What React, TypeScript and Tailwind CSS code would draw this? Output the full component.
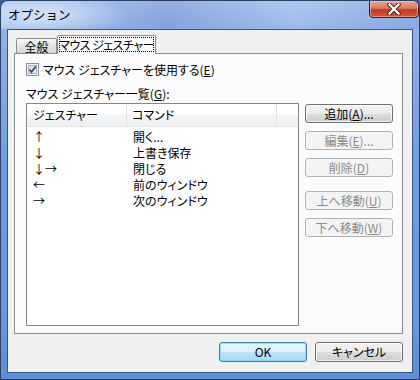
export default function App() {
  const rows: [string, string][] = [
    ["↑", "開く..."],
    ["↓", "上書き保存"],
    ["↓→", "閉じる"],
    ["←", "前のウィンドウ"],
    ["→", "次のウィンドウ"],
  ];
  return (
    <div className="w-[420px] h-[380px] bg-[#3a5f9a]">
      <div className="w-[420px] h-[380px] rounded-t-[8px] border border-[#2a3f63] overflow-hidden flex flex-col font-['Noto_Sans_CJK_JP',sans-serif] [font-feature-settings:'palt'] text-[12px] text-black bg-[linear-gradient(to_bottom,#a6c2ec_0px,#8fb2e8_30px,#6f9be2_45%,#6a97e0_80%,#5e8dd9_100%)]">
        {/* title bar */}
        <div className="h-[28px] flex items-start justify-between bg-[radial-gradient(ellipse_90px_22px_at_40px_14px,rgba(225,236,252,0.85),rgba(225,236,252,0)),linear-gradient(to_right,rgba(255,255,255,0.15),rgba(40,70,160,0.15)_40%,rgba(255,255,255,0.1)_70%,rgba(40,70,160,0.1))]">
          <div className="pl-[7px] pt-[6px] text-[12.5px] leading-[16px] text-black [font-feature-settings:normal]">オプション</div>
          <div className="w-[50px] h-[18px] mt-[-1px] rounded-b-[4px] border border-[#4a1a12] bg-[linear-gradient(to_bottom,#e9a793_0%,#d77b63_45%,#c23a1e_55%,#d0573a_100%)] flex items-center justify-center shadow-[inset_0_0_0_1px_rgba(255,210,200,0.5)]">
            <svg width="14" height="12" viewBox="0 0 14 12">
              <path d="M2.5 1.5 L11.5 10.5 M11.5 1.5 L2.5 10.5" stroke="#5a2018" strokeWidth="4.2" strokeLinecap="square" />
              <path d="M2.5 1.5 L11.5 10.5 M11.5 1.5 L2.5 10.5" stroke="#ffffff" strokeWidth="2.2" strokeLinecap="square" />
            </svg>
          </div>
        </div>
        {/* client */}
        <div className="flex-1 mx-[6px] mb-[6px] border border-[#3d5680] bg-[#f0f0f0] flex flex-col">
          <div className="pl-[6px] pt-[5px]">
            {/* tabs */}
            <div className="h-[18px] flex items-end pl-[2px] relative z-10">
              <div className="w-[41px] h-[15px] border-t border-l border-r border-[#898c95] rounded-t-[2px] bg-[linear-gradient(to_bottom,#f6f6f6,#e6e6e6_50%,#d6d6d6)] flex items-center justify-center leading-[13px]">
                全般
              </div>
              <div className="w-[99px] h-[19px] mb-[-1px] border-t border-l border-r border-[#898c95] rounded-t-[2px] bg-[#fcfcfc] p-[1px]">
                <div className="w-full h-[15px] border border-dotted border-black flex items-center justify-center leading-[13px] whitespace-nowrap tracking-[-0.5px]">
                  マウス ジェスチャー
                </div>
              </div>
            </div>
            {/* panel */}
            <div className="w-[389px] h-[281px] border border-[#898c95] bg-[#fcfcfc] pl-[11px] pt-[9px] flex flex-col">
              <div className="flex items-center h-[13px]">
                <svg width="13" height="13" viewBox="0 0 13 13">
                  <rect x="0.5" y="0.5" width="12" height="12" fill="#f4f4f4" stroke="#8e8f8f" />
                  <rect x="2.5" y="2.5" width="8" height="8" fill="#dfe4ea" stroke="#a9b1ba" />
                  <path d="M3.5 6.5 L5.5 9 L9.8 3.2" fill="none" stroke="#2b4c8c" strokeWidth="1.7" />
                </svg>
                <span className="ml-[4px] leading-[13px]">
                  マウス ジェスチャーを使用する(<span className="underline">E</span>)
                </span>
              </div>
              <div className="mt-[11px] h-[13px] leading-[13px]">
                マウス ジェスチャー一覧(<span className="underline">G</span>):
              </div>
              <div className="mt-[3px] flex items-start">
                <div className="w-[273px] h-[223px] border border-[#828790] bg-white flex flex-col">
                  <div className="h-[23px] flex bg-[linear-gradient(to_bottom,#ffffff,#ffffff_45%,#f3f4f6_55%,#eef0f2)] border-b border-[#e5e5e5]">
                    <div className="w-[100px] border-r border-[#dfe2e6] pl-[6px] flex items-center">ジェスチャー</div>
                    <div className="w-[150px] border-r border-[#dfe2e6] pl-[5px] flex items-center">コマンド</div>
                    <div className="flex-1"></div>
                  </div>
                  <div className="pt-[2px]">
                    {rows.map(([g, c]) => (
                      <div key={c} className="h-[16px] flex items-center leading-[16px]">
                        <div className="w-[100px] pl-[6px]">{g}</div>
                        <div className="pl-[6px]">{c}</div>
                      </div>
                    ))}
                  </div>
                </div>
                <div className="ml-[6px] mt-[1px] flex flex-col">
                  <button className="w-[88px] h-[19px] rounded-[3px] border border-[#707070] bg-[linear-gradient(to_bottom,#f2f2f2,#ebebeb_50%,#dddddd_50%,#cfcfcf)] shadow-[inset_0_0_0_1px_rgba(255,255,255,0.7)] leading-[15px] text-black">
                    追加(<span className="underline">A</span>)...
                  </button>
                  <button className="mt-[8px] w-[88px] h-[19px] rounded-[3px] border border-[#adb2b5] bg-[#f4f4f4] leading-[15px] text-[#8a8a8a]">
                    編集(<span className="underline">E</span>)...
                  </button>
                  <button className="mt-[8px] w-[88px] h-[19px] rounded-[3px] border border-[#adb2b5] bg-[#f4f4f4] leading-[15px] text-[#8a8a8a]">
                    削除(<span className="underline">D</span>)
                  </button>
                  <button className="mt-[14px] w-[88px] h-[19px] rounded-[3px] border border-[#adb2b5] bg-[#f4f4f4] leading-[15px] text-[#8a8a8a]">
                    上へ移動(<span className="underline">U</span>)
                  </button>
                  <button className="mt-[8px] w-[88px] h-[19px] rounded-[3px] border border-[#adb2b5] bg-[#f4f4f4] leading-[15px] text-[#8a8a8a]">
                    下へ移動(<span className="underline">W</span>)
                  </button>
                </div>
              </div>
            </div>
          </div>
          {/* bottom buttons */}
          <div className="mt-[8px] flex justify-end gap-[8px] pr-[9px]">
            <button className="w-[88px] h-[20px] rounded-[3px] border border-[#3c7fb1] bg-[linear-gradient(to_bottom,#eaf6fd,#d9f0fc_50%,#bee6fd_50%,#a7d9f5)] shadow-[inset_0_0_0_1px_rgba(120,220,250,0.8)] leading-[16px] text-black">
              OK
            </button>
            <button className="w-[88px] h-[20px] rounded-[3px] border border-[#707070] bg-[linear-gradient(to_bottom,#f2f2f2,#ebebeb_50%,#dddddd_50%,#cfcfcf)] shadow-[inset_0_0_0_1px_rgba(255,255,255,0.7)] leading-[16px] text-black">
              キャンセル
            </button>
          </div>
        </div>
      </div>
    </div>
  );
}
